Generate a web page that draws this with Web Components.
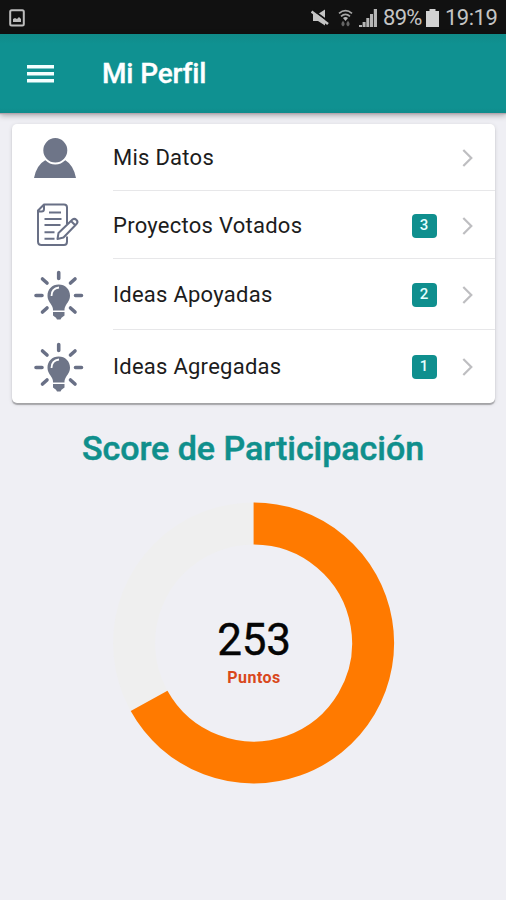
<!DOCTYPE html>
<html lang="es">
<head>
<meta charset="utf-8">
<title>Mi Perfil</title>
<style>
html,body{margin:0;height:100%;background:#efeff4;font-family:Roboto,sans-serif;overflow:hidden}
</style>
</head>
<body>
<profile-page></profile-page>
<script>
const define = (name, html, setup) => {
  const t = document.createElement('template');
  t.innerHTML = html;
  customElements.define(name, class extends HTMLElement {
    constructor() {
      super();
      this.attachShadow({mode: 'open'}).append(t.content.cloneNode(true));
    }
    connectedCallback() { if (setup) setup(this, this.shadowRoot); }
  });
};

define('status-bar', `
<style>
:host{display:flex;align-items:center;height:34px;background:#111;color:#c4c4c4;box-sizing:border-box;padding:1px 9px 0 9px;font-size:22px;line-height:34px}
svg{display:block;flex:none}
.gap{flex:1}
.pct{letter-spacing:-.7px;margin-left:6px;width:40px;white-space:nowrap}
.bat{margin-left:3px}
.time{margin-left:6px;width:52px;white-space:nowrap;letter-spacing:-.5px}
</style>
<svg width="16" height="18" viewBox="0 0 16 18"><rect x="1.200" y="1.200" width="13.600" height="15.400" rx="1.500" fill="none" stroke="#bdbdbd" stroke-width="2"/><path d="M4 13V10l2-1 2 1 2-2 2 2v3z" fill="#bdbdbd"/></svg>
<span class="gap"></span>
<svg style="margin-right:1px" width="18" height="18" viewBox="0 0 18 18"><path d="M2 5h5l7-4.500v16L7 12H2z" fill="#c4c4c4"/><path d="M1 .5l17 12.500" stroke="#111" stroke-width="2"/><path d="M.5 2.500l16.500 12.500" stroke="#c4c4c4" stroke-width="2.600"/></svg>
<svg style="margin-left:8px" width="15" height="18" viewBox="0 0 15 18"><g fill="none" stroke="#a8a8a8" stroke-width="1.700"><path d="M1 4.400Q7.500-1 14 4.400M3 7.300q4.500-4 9 0"/></g><path d="M5 9q2.500-2 5 0l-2.500 3z" fill="#bbb"/><path d="M3.500 14L5 11.800 6.500 14v2L5 17.500 3.500 16zM8.500 14l1.500-2.200 1.500 2.200v2L10 17.500 8.500 16z" fill="#666"/></svg>
<svg style="margin-left:6px" width="18" height="18" viewBox="0 0 18 18"><path d="M0 18v-2h3v2zm3.600 0v-5h3v5zm3.700 0V9h3v9zm3.700 0V5h3v13zm3.800 0V0H18v18z" fill="#b5b5b5"/></svg>
<span class="pct">89%</span>
<svg class="bat" width="13" height="18" viewBox="0 0 13 18"><path d="M3.500 0h6v2H13v16H0V2h3.500z" fill="#d2d2d2"/></svg>
<span class="time">19:19</span>`);

define('app-header', `
<style>
:host{display:flex;align-items:center;height:79px;box-sizing:border-box;padding-left:27px;background:linear-gradient(#108b89,#0f9191 10px,#0f9191 74px,#0e8b8b);color:#fff;box-shadow:0 1px 1px #b5a5ad,0 2px 6px rgba(0,0,0,.35);position:relative}
svg{display:block;flex:none}
h1{margin:0 0 0 48px;font-size:28px;line-height:32px;font-weight:500;letter-spacing:-.15px;white-space:nowrap;-webkit-text-stroke:.35px #fff}
</style>
<svg width="27" height="20" viewBox="0 0 27 20"><path d="M0 1h27v3.600H0zm0 7h27v3.600H0zm0 7h27v3.600H0z" fill="#f4ffff"/></svg>
<h1><slot></slot></h1>`);

const icons = {
  user: `<svg width="50" height="50" viewBox="0 0 50 50"><path d="M11.500 27q9.500 7 19.500 0 8.500 5 11 18H0Q2.500 32 11.500 27z"/><ellipse cx="21.300" cy="17.300" rx="13" ry="13.200" stroke="#fff" stroke-width="2"/></svg>`,
  doc: `<svg width="50" height="50" viewBox="0 0 50 50"><g fill="none" stroke="#697086" stroke-width="2" stroke-linejoin="round"><path d="M33 24V7.500Q33 4.500 30 4.500H10L4 10.500v31q0 3.500 3.500 3.500H30q3 0 3-3.500v-5M10 4.500v4.500q0 2.500-2.500 2.500H4"/><path d="M15 12.500h12M10.500 19h17M10.500 25h16M10.500 32.200h10M10.500 38.700h10"/><path fill="#fff" d="M24.500 33L38.500 19.500q2-1.500 4 .5t0 4L29.500 37.500l-6 1.500zM37 21l4 4"/></g></svg>`,
  bulb: `<svg width="50" height="50" viewBox="0 0 50 50"><g stroke="#697086" stroke-width="3.600" stroke-linecap="round" fill="none"><path d="M24.700 2.500v6M8.500 9l4.500 4M41 9l-4.500 4M2 25.500h6M41.500 25.500h6M8.500 42l4.500-4M41 42l-4.500-4"/></g><path d="M24.700 14.500c-6.500 0-11.200 4.800-11.200 11 0 5 2.600 7 4.500 10.500.9 1.700 1 2.700 1 4.500h11.500c0-1.800.1-2.800 1-4.500 1.900-3.500 4.500-5.500 4.500-10.500 0-6.200-4.800-11-11.300-11z"/><path d="M17.500 26q0-7.500 7.500-8.500" fill="none" stroke="#fff" stroke-width="1.800"/><path d="M19 42h11.500v3.500l-3 2.300-1 1.700h-3.500l-1-1.700-3-2.300z"/></svg>`
};

define('menu-row', `
<style>
:host{display:flex;box-sizing:border-box;height:var(--h);padding-left:22px}
.icon{width:79px;display:flex;align-items:center;flex:none}
.icon svg{display:block;fill:#6e7588}
.main{display:flex;align-items:center;flex:1;border-bottom:1px solid #e7e7e9;padding:var(--pt,2px) 22px 0 0}
:host([last]) .main{border-bottom:0}
.label{flex:1;font-size:22px;line-height:28px;letter-spacing:.26px;color:#1c1c1c;white-space:nowrap}
.badge{width:25px;height:24px;border-radius:4px;background:#0f8f8e;color:#e5ffff;font-size:15px;font-weight:500;line-height:22px;text-align:center;margin-right:25.500px}
.badge[hidden]{display:none}
.chev{display:block}
</style>
<span class="icon"></span>
<span class="main"><span class="label"><slot></slot></span><span class="badge"></span>
<svg class="chev" width="11" height="18" viewBox="0 0 11 18"><path d="M1.300 1l8 8-8 8" fill="none" stroke="#bebec1" stroke-width="2.200"/></svg></span>`,
(el, r) => {
  r.querySelector('.icon').innerHTML = icons[el.getAttribute('icon')];
  const b = r.querySelector('.badge');
  b.textContent = el.getAttribute('count') || '';
  b.hidden = !el.hasAttribute('count');
});

define('menu-card', `
<style>
:host{display:block;margin:11px 11px 0 12px;height:279px;background:#fff;border-radius:5px;box-shadow:0 2px 1px rgba(0,0,0,.26),0 1px 4px rgba(0,0,0,.13)}
</style><slot></slot>`);

define('score-ring', `
<style>
:host{display:grid;width:282px;height:282px;margin:34px 0 0 113px}
svg,.text{grid-area:1/1}
.text{display:flex;flex-direction:column;align-items:center;padding-top:113px}
.value{font-size:44px;line-height:50px;color:#050505;letter-spacing:-.2px;-webkit-text-stroke:.4px #050505}
.unit{font-size:16px;line-height:20px;font-weight:700;color:#d9481c;margin-top:3px;letter-spacing:.5px}
</style>
<svg width="282" height="282" viewBox="0 0 282 282"><circle cx="140.600" cy="141" r="119.500" fill="none" stroke="#efefef" stroke-width="42"/><path fill="none" stroke="#ff7a00" stroke-width="42"/></svg>
<div class="text"><span class="value"></span><span class="unit"><slot></slot></span></div>`,
(el, r) => {
  const a = +el.getAttribute('angle') * Math.PI / 180, R = 119.5;
  r.querySelector('path').setAttribute('d', `M140.6 ${141 - R}A${R} ${R} 0 1 1 ${140.6 + R * Math.sin(a)} ${141 - R * Math.cos(a)}`);
  r.querySelector('.value').textContent = el.getAttribute('value');
});

define('profile-page', `
<style>
:host{display:flex;flex-direction:column;height:900px;background:#efeff4}
h2{margin:25px 0 0;font-size:34px;line-height:40px;font-weight:500;color:#0f8f8c;text-align:center;white-space:nowrap;letter-spacing:-.04px;-webkit-text-stroke:.5px #0f8f8c}
</style>
<status-bar></status-bar>
<app-header>Mi Perfil</app-header>
<menu-card>
<menu-row icon="user" style="--h:67px;--pt:2px">Mis Datos</menu-row>
<menu-row icon="doc" count="3" style="--h:68px">Proyectos Votados</menu-row>
<menu-row icon="bulb" count="2" style="--h:71px;--pt:2px">Ideas Apoyadas</menu-row>
<menu-row icon="bulb" count="1" last style="--h:73px;--pt:1px">Ideas Agregadas</menu-row>
</menu-card>
<h2>Score de Participación</h2>
<score-ring value="253" angle="241">Puntos</score-ring>`);
</script>
</body>
</html>
